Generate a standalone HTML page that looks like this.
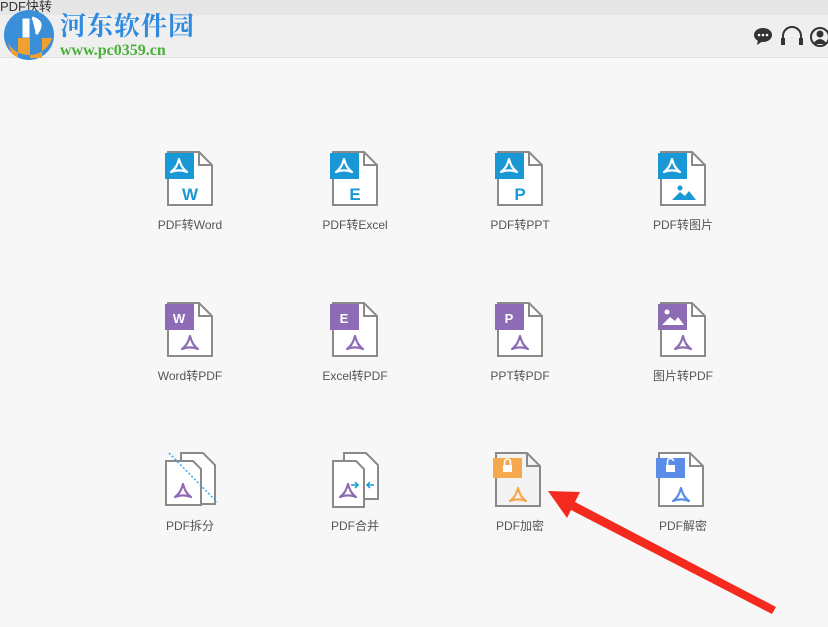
<!DOCTYPE html><html><head><meta charset="utf-8"><style>
body{margin:0;width:828px;height:627px;overflow:hidden;background:#f7f7f7;font-family:"Liberation Sans","Noto Sans CJK SC",sans-serif;position:relative}
.t{position:absolute;left:0;top:0;width:828px;height:15px;background:#e6e6e6;font-size:13px;color:#333;line-height:13px}
.bar{position:absolute;left:0;top:15px;width:828px;height:42px;background:#efefef;border-bottom:1px solid #e2e2e2}
.i{position:absolute;width:50px;height:56px}
.l{position:absolute;width:140px;text-align:center;font-size:12px;color:#555}
</style></head><body>
<div class="t">PDF快转</div>
<div class="bar"></div>
<svg style="position:absolute;left:2px;top:8px" width="56" height="54"><circle cx="27" cy="27" r="25" fill="#3a8fd8"/><path d="M4 30 A24 24 0 0 0 50 30 L40 30 L40 50 L28 50 L28 30 L16 30 L16 50 L10 46 Z" fill="#f0a030"/><path d="M22 12 L26 12 L26 28 L22 28Z M30 10 Q44 14 34 26" fill="#fff" stroke="#fff" stroke-width="3"/></svg>
<div style="position:absolute;left:60px;top:6px;font-size:26px;font-weight:bold;color:#2f8be0;font-family:'Liberation Serif','Noto Serif CJK SC',serif;letter-spacing:1px">河东软件园</div>
<div style="position:absolute;left:60px;top:42px;font-size:16px;font-weight:bold;color:#4caf3a;font-family:'Liberation Serif',serif">www.pc0359.cn</div>
<svg style="position:absolute;left:752px;top:26px" width="76" height="22"><ellipse cx="11" cy="9" rx="9" ry="7" fill="#333"/><path d="M6 14 L5 19 L11 15Z" fill="#333"/><circle cx="7" cy="9" r="1.3" fill="#fff"/><circle cx="11" cy="9" r="1.3" fill="#fff"/><circle cx="15" cy="9" r="1.3" fill="#fff"/><path d="M31 15 V10 A9 9 0 0 1 49 10 V15" fill="none" stroke="#333" stroke-width="2"/><rect x="29" y="12" width="4" height="7" fill="#333"/><rect x="47" y="12" width="4" height="7" fill="#333"/><circle cx="68" cy="11" r="9" fill="none" stroke="#333" stroke-width="2"/><circle cx="68" cy="8" r="3.5" fill="#333"/><path d="M61 18 Q68 8 75 18Z" fill="#333"/></svg>

<svg width="0" height="0" style="position:absolute"><defs>
<g id="doc"><path d="M3 1H34L47 14V54H3Z" fill="#fff" stroke="#8a8a8a" stroke-width="2"/><path d="M34 1V14H47" fill="none" stroke="#8a8a8a" stroke-width="2"/></g>
<g id="acro"><path d="M0 -7 C2 0 4 3 8 6 C3 4 -3 4 -8 6 C-4 3 -2 0 0 -7Z" fill="none" stroke-width="2.2" stroke-linejoin="round"/></g>
</defs></svg>

<!-- row1 blue -->
<svg class="i" style="left:165px;top:151px"><use href="#doc"/><rect x="0" y="2" width="29" height="26" fill="#1a98d5"/><use href="#acro" x="14" y="15" stroke="#fff"/><text x="25" y="49" font-size="17" font-weight="bold" fill="#1a98d5" text-anchor="middle" font-family="Liberation Sans">W</text></svg>
<svg class="i" style="left:330px;top:151px"><use href="#doc"/><rect x="0" y="2" width="29" height="26" fill="#1a98d5"/><use href="#acro" x="14" y="15" stroke="#fff"/><text x="25" y="49" font-size="17" font-weight="bold" fill="#1a98d5" text-anchor="middle" font-family="Liberation Sans">E</text></svg>
<svg class="i" style="left:495px;top:151px"><use href="#doc"/><rect x="0" y="2" width="29" height="26" fill="#1a98d5"/><use href="#acro" x="14" y="15" stroke="#fff"/><text x="25" y="49" font-size="17" font-weight="bold" fill="#1a98d5" text-anchor="middle" font-family="Liberation Sans">P</text></svg>
<svg class="i" style="left:658px;top:151px"><use href="#doc"/><rect x="0" y="2" width="29" height="26" fill="#1a98d5"/><use href="#acro" x="14" y="15" stroke="#fff"/><circle cx="22" cy="37" r="2.5" fill="#1a98d5"/><path d="M14 49 L22 41 L27 45 L31 40 L38 49Z" fill="#1a98d5"/></svg>
<!-- row2 purple -->
<svg class="i" style="left:165px;top:302px"><use href="#doc"/><rect x="0" y="2" width="29" height="26" fill="#8e6bb5"/><text x="14" y="21" font-size="13" font-weight="bold" fill="#fff" text-anchor="middle" font-family="Liberation Sans">W</text><use href="#acro" x="25" y="41" stroke="#8e6bb5"/></svg>
<svg class="i" style="left:330px;top:302px"><use href="#doc"/><rect x="0" y="2" width="29" height="26" fill="#8e6bb5"/><text x="14" y="21" font-size="13" font-weight="bold" fill="#fff" text-anchor="middle" font-family="Liberation Sans">E</text><use href="#acro" x="25" y="41" stroke="#8e6bb5"/></svg>
<svg class="i" style="left:495px;top:302px"><use href="#doc"/><rect x="0" y="2" width="29" height="26" fill="#8e6bb5"/><text x="14" y="21" font-size="13" font-weight="bold" fill="#fff" text-anchor="middle" font-family="Liberation Sans">P</text><use href="#acro" x="25" y="41" stroke="#8e6bb5"/></svg>
<svg class="i" style="left:658px;top:302px"><use href="#doc"/><rect x="0" y="2" width="29" height="26" fill="#8e6bb5"/><circle cx="9" cy="10" r="2.5" fill="#fff"/><path d="M4 23 L12 15 L17 19 L20 15 L26 23Z" fill="#fff"/><use href="#acro" x="25" y="41" stroke="#8e6bb5"/></svg>
<!-- row3 -->
<svg class="i" style="left:163px;top:452px;width:60px"><path d="M18 1H40L52 13V52H18Z" fill="#fff" stroke="#8a8a8a" stroke-width="2"/><path d="M3 9H30L38 17V53H3Z" fill="#fff" stroke="#8a8a8a" stroke-width="2"/><use href="#acro" x="20" y="39" stroke="#8e6bb5"/><path d="M6 1 L54 50" stroke="#3aa8e0" stroke-width="1.5" stroke-dasharray="2 2"/></svg>
<svg class="i" style="left:330px;top:452px;width:52px"><path d="M14 1H36L48 13V47H14Z" fill="#fff" stroke="#8a8a8a" stroke-width="2"/><path d="M3 9H26L34 17V55H3Z" fill="#fff" stroke="#8a8a8a" stroke-width="2"/><use href="#acro" x="18" y="39" stroke="#8e6bb5"/><path d="M21 33H28M25 30L28 33L25 36M44 33H37M40 30L37 33L40 36" stroke="#1a98d5" stroke-width="1.5" fill="none"/></svg>
<svg class="i" style="left:493px;top:452px"><path d="M3 1H34L47 14V54H3Z" fill="#f3f3f3" stroke="#8a8a8a" stroke-width="2"/><path d="M34 1V14H47" fill="none" stroke="#8a8a8a" stroke-width="2"/><rect x="0" y="6" width="29" height="20" fill="#f5a84e"/><rect x="10" y="13" width="9" height="7" fill="#fff"/><path d="M11.5 13V10A3 3 0 0 1 17.5 10V13" stroke="#fff" stroke-width="1.6" fill="none"/><use href="#acro" x="25" y="43" stroke="#f5a84e"/></svg>
<svg class="i" style="left:656px;top:452px"><use href="#doc"/><rect x="0" y="6" width="29" height="20" fill="#5b8de8"/><rect x="10" y="13" width="9" height="7" fill="#fff"/><path d="M11.5 13V10A3 3 0 0 1 17.5 9" stroke="#fff" stroke-width="1.6" fill="none"/><use href="#acro" x="25" y="43" stroke="#5b8de8"/></svg>

<div class="l" style="left:120px;top:216px">PDF转Word</div>
<div class="l" style="left:285px;top:216px">PDF转Excel</div>
<div class="l" style="left:450px;top:216px">PDF转PPT</div>
<div class="l" style="left:613px;top:216px">PDF转图片</div>
<div class="l" style="left:120px;top:367px">Word转PDF</div>
<div class="l" style="left:285px;top:367px">Excel转PDF</div>
<div class="l" style="left:450px;top:367px">PPT转PDF</div>
<div class="l" style="left:613px;top:367px">图片转PDF</div>
<div class="l" style="left:120px;top:517px">PDF拆分</div>
<div class="l" style="left:285px;top:517px">PDF合并</div>
<div class="l" style="left:450px;top:517px">PDF加密</div>
<div class="l" style="left:613px;top:517px">PDF解密</div>

<svg style="position:absolute;left:0;top:0" width="828" height="627"><path d="M776 607 L575 502 L580 492 L548 491 L567 518 L571 510 L772 614Z" fill="#f52a1e"/></svg>
</body></html>
